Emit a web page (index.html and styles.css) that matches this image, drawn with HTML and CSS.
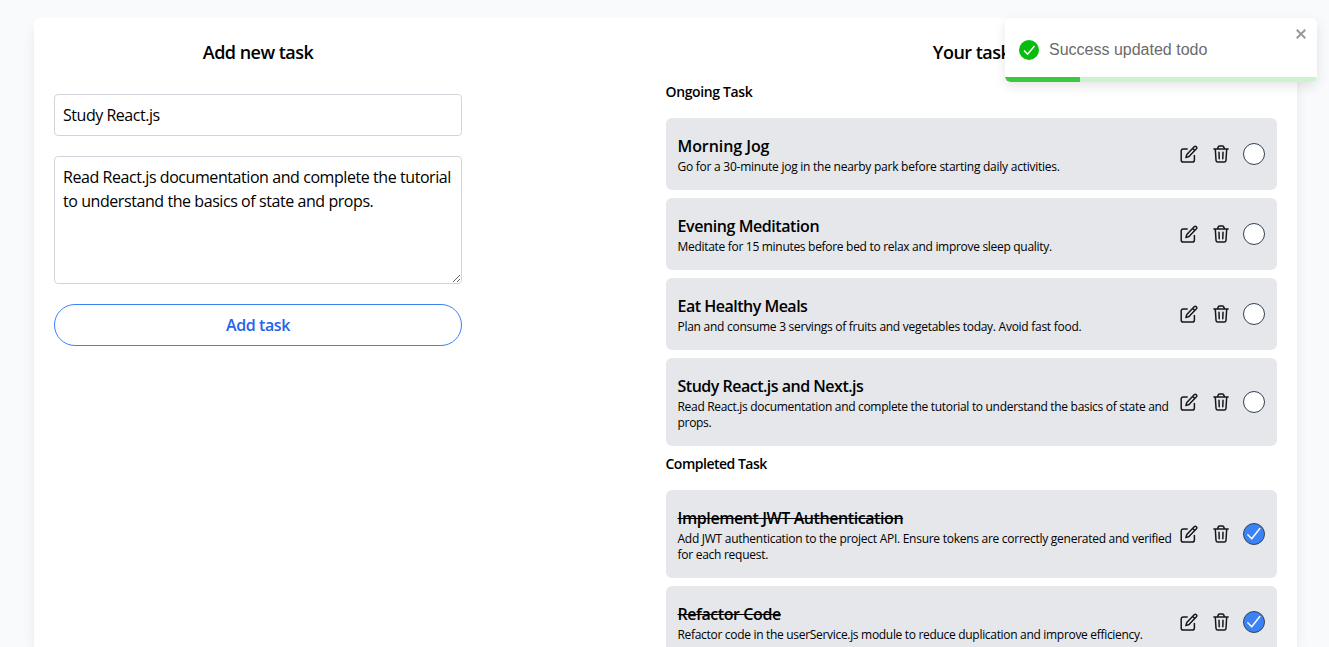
FILE: index.html
```html
<!DOCTYPE html>
<html lang="en">
<head>
<meta charset="utf-8">
<title>Todo</title>
<link rel="stylesheet" href="styles.css">
</head>
<body>
<svg class="sprite" aria-hidden="true">
  <symbol id="edit" viewBox="0 0 18 18"><path d="M7.2 3.9H3.4Q1.2 3.9 1.2 6.1v8.8q0 2.1 2.1 2.1h8.9q2.2 0 2.2-2.1V10.6M5.9 12.6l.9-3.2 7.4-7.7q1-1 2.1 0 1.1 1 .1 2.1L9 11.5zM12.6 3.4l2.2 2.1"/></symbol>
  <symbol id="trash" viewBox="0 0 16 18"><path d="M.9 3.9h14.2M4.5 3.7l.8-1.8q.4-.9 1.2-.9h3q.8 0 1.2.9l.8 1.8M2.3 4l.7 11.3q.1 1.8 1.8 1.8h6.4q1.7 0 1.8-1.8L13.7 4M6 7.2l.2 6.6M10 7.2l-.2 6.6"/></symbol>
  <symbol id="tick" viewBox="0 0 22 22"><path d="M4.2 11.8l4.3 4.5L17.4 4.9"/></symbol>
</svg>
<main class="panel">
  <section class="form">
    <h1 class="heading heading-form">Add new task</h1>
    <input class="field" type="text" value="Study React.js">
    <textarea class="field area">Read React.js documentation and complete the tutorial
to understand the basics of state and props.</textarea>
    <button class="add">Add task</button>
  </section>
  <section class="tasks">
    <h1 class="heading">Your task</h1>
    <h2 class="group">Ongoing Task</h2>
    <div class="list">
      <article class="task jog"><div class="text"><h3 class="title">Morning Jog</h3><p class="desc">Go for a 30-minute jog in the nearby park before starting daily activities.</p></div><div class="actions"><svg class="edit"><use href="#edit"/></svg><svg class="trash"><use href="#trash"/></svg><span class="check"></span></div></article>
      <article class="task meditation"><div class="text"><h3 class="title">Evening Meditation</h3><p class="desc">Meditate for 15 minutes before bed to relax and improve sleep quality.</p></div><div class="actions"><svg class="edit"><use href="#edit"/></svg><svg class="trash"><use href="#trash"/></svg><span class="check"></span></div></article>
      <article class="task meals"><div class="text"><h3 class="title">Eat Healthy Meals</h3><p class="desc">Plan and consume 3 servings of fruits and vegetables today. Avoid fast food.</p></div><div class="actions"><svg class="edit"><use href="#edit"/></svg><svg class="trash"><use href="#trash"/></svg><span class="check"></span></div></article>
      <article class="task study"><div class="text"><h3 class="title">Study React.js and Next.js</h3><p class="desc">Read React.js documentation and complete the tutorial to understand the basics of state and<br>props.</p></div><div class="actions"><svg class="edit"><use href="#edit"/></svg><svg class="trash"><use href="#trash"/></svg><span class="check"></span></div></article>
    </div>
    <h2 class="group group-done">Completed Task</h2>
    <div class="list">
      <article class="task done jwt"><div class="text"><h3 class="title">Implement JWT Authentication</h3><p class="desc">Add JWT authentication to the project API. Ensure tokens are correctly generated and verified<br>for each request.</p></div><div class="actions"><svg class="edit"><use href="#edit"/></svg><svg class="trash"><use href="#trash"/></svg><span class="check"><svg class="tick"><use href="#tick"/></svg></span></div></article>
      <article class="task done refactor"><div class="text"><h3 class="title">Refactor Code</h3><p class="desc">Refactor code in the userService.js module to reduce duplication and improve efficiency.</p></div><div class="actions"><svg class="edit"><use href="#edit"/></svg><svg class="trash"><use href="#trash"/></svg><span class="check"><svg class="tick"><use href="#tick"/></svg></span></div></article>
    </div>
  </section>
</main>
<aside class="toast" role="alert">
  <div class="toast-body">
    <svg class="toast-icon" viewBox="0 0 20 20"><circle cx="10" cy="10" r="10" fill="#07bc0c"/><path d="M5 10.5l3.6 3.7 6.9-8.3" fill="none" stroke="#fff" stroke-width="1.5"/></svg>
    <span class="toast-text">Success updated todo</span>
    <svg class="close" viewBox="0 0 10 10"><path d="M.7.7l8.6 8.6M9.3.7L.7 9.3"/></svg>
  </div>
  <div class="progress"><div class="progress-value"></div></div>
</aside>
</body>
</html>
```
FILE: styles.css
```css
* { box-sizing: border-box; margin: 0; padding: 0; }
body {
  height: 647px;
  overflow: hidden;
  padding: 18px 32px 0 34px;
  background: #f9fafb;
  color: #000;
  font: 16px/24px "Open Sans", "Noto Sans", sans-serif;
}
.sprite { display: none; }
.panel {
  display: flex;
  justify-content: space-between;
  height: 629px;
  overflow: hidden;
  padding: 20px 20px 0;
  border-radius: 6px 6px 0 0;
  background: #fff;
  box-shadow: 0 10px 15px -3px rgba(0,0,0,.1), 0 4px 6px -4px rgba(0,0,0,.1);
}
.form { width: 408px; display: flex; flex-direction: column; gap: 20px; }
.tasks { width: 611px; }
.heading { padding-top: 1px; font-size: 18px; line-height: 27px; font-weight: 600; text-align: center; letter-spacing: -.53px; }
.heading-form { margin-bottom: 8px; }
.field {
  display: block;
  width: 100%;
  height: 42px;
  padding: 8px;
  border: 1px solid #d1d5db;
  border-radius: 4px;
  background: #fff;
  color: #000;
  font: inherit;
  letter-spacing: -.47px;
  outline: none;
}
.area { height: 128px; resize: vertical; white-space: pre; overflow: hidden; letter-spacing: -.43px; }
.add {
  height: 42px;
  border: 1px solid #3b82f6;
  border-radius: 21px;
  background: #fff;
  color: #2563eb;
  font: 600 16px/24px "Open Sans", sans-serif;
  letter-spacing: -.4px;
}
.group { margin: 16px 0; text-indent: -.5px; font-size: 14px; line-height: 20px; font-weight: 600; letter-spacing: -.36px; }
.group-done { margin-top: 8px; letter-spacing: -.5px; }
.list { display: flex; flex-direction: column; gap: 8px; }
.task {
  display: flex;
  align-items: center;
  justify-content: space-between;
  padding: 16px 12px 16px 11.5px;
  border-radius: 6px;
  background: #e5e7eb;
}
.text { width: 494px; white-space: nowrap; }
.title { height: 25px; font-size: 16px; line-height: 24px; font-weight: 600; letter-spacing: -.42px; }
.done .title { text-decoration: line-through; }
.desc { margin-bottom: -1px; font-size: 12px; line-height: 16px; letter-spacing: -.3px; }
.jog .title { letter-spacing: -.07px; }
.jog .desc { letter-spacing: -.25px; }
.meals .title, .study .title { letter-spacing: -.5px; }
.meals .desc, .jwt .desc { letter-spacing: -.27px; }
.study .desc, .refactor .desc { letter-spacing: -.31px; }
.actions { display: flex; align-items: center; }
.actions svg { fill: none; stroke: #18181b; stroke-width: 1.5; stroke-linecap: round; stroke-linejoin: round; }
.edit { width: 18px; height: 18px; margin-right: 15px; }
.trash { width: 16px; height: 18px; margin-right: 14px; }
.check { width: 22px; height: 22px; border: 1px solid #334155; border-radius: 50%; background: #fff; }
.done .check { background: #3b82f6; }
.tick { display: block; width: 20px; height: 20px; }
.actions .tick { stroke: #fff; stroke-width: 1.6; }
.toast {
  position: absolute;
  top: 18px;
  left: 1005px;
  width: 312px;
  height: 64px;
  overflow: hidden;
  display: flex;
  flex-direction: column;
  border-radius: 6px;
  background: #fff;
  box-shadow: 0 4px 12px rgba(0,0,0,.1);
}
.toast-body { flex: 1; display: flex; align-items: center; padding: 5px 11px 0 14px; }
.toast-icon { width: 20px; height: 20px; margin-right: 10px; }
.toast-text { flex: 1; color: #6b6b6b; font: 16px/24px "Liberation Sans", Arial, sans-serif; }
.close { align-self: flex-start; width: 10px; height: 10px; margin-top: 6px; fill: none; stroke: #999; stroke-width: 2; }
.progress { height: 5px; background: #cdf2ce; }
.progress-value { width: 75px; height: 5px; background: #39c93d; }
```
